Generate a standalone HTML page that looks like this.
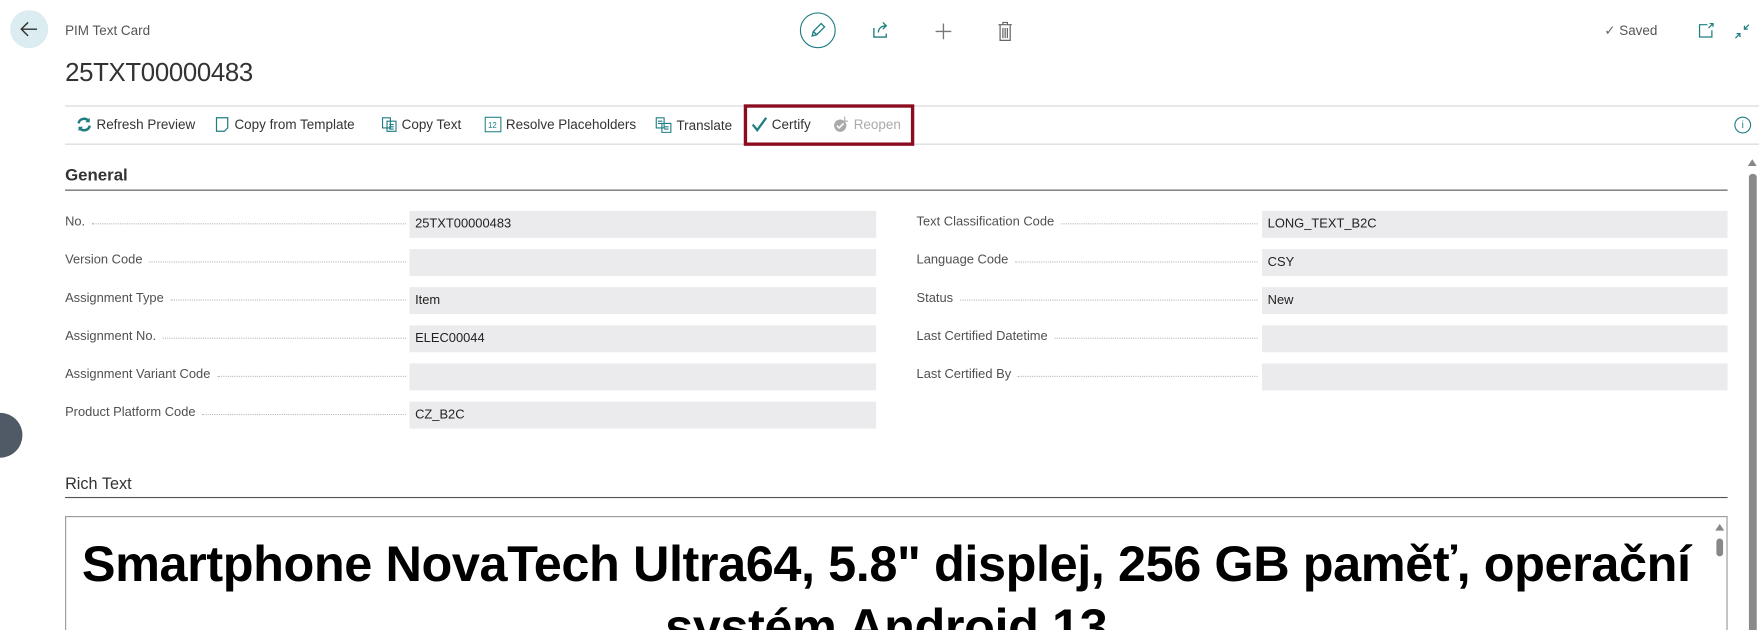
<!DOCTYPE html>
<html><head><meta charset="utf-8"><style>
html,body{margin:0;padding:0;width:1759px;height:630px;overflow:hidden;background:#fff}
#w{position:absolute;left:0;top:0;width:1568px;height:562px;transform:scale(1.12181);transform-origin:0 0;font-family:"Liberation Sans",sans-serif;color:#333;overflow:hidden}
.a{position:absolute}
.t{font-size:12.5px;color:#333;white-space:nowrap}
.lbl{position:absolute;font-size:11.5px;color:#505050;white-space:nowrap;display:flex;align-items:center}
.lbl .d{border-bottom:1px dotted #bbb;flex:1;margin:0 6px;height:0;margin-top:3px}
.box{position:absolute;height:24px;background:#ebebed;font-size:11.5px;color:#222;line-height:24px;padding-left:5px;box-sizing:border-box}
.act{position:absolute;top:104px;font-size:12px;color:#333;display:flex;align-items:center;white-space:nowrap}
.act svg{margin-right:4px}
</style></head><body><div id="w">
<div class="a" style="left:9px;top:9px;width:34px;height:34px;border-radius:50%;background:#dcedf2"></div>
<svg class="a" style="left:17px;top:18px" width="18" height="16" viewBox="0 0 18 16"><path d="M16 8H2M8 2L2 8l6 6" stroke="#333" stroke-width="1.3" fill="none"/></svg>
<div class="a t" style="left:58px;top:20px;font-size:12px;color:#555">PIM Text Card</div>
<div class="a" style="left:58px;top:51px;font-size:23px;color:#333;letter-spacing:-0.3px">25TXT00000483</div>
<div class="a" style="left:713px;top:11px;width:32px;height:32px;border-radius:50%;border:1.3px solid #1e7d82;box-sizing:border-box"></div>
<svg class="a" style="left:721px;top:19px" width="16" height="16" viewBox="0 0 16 16"><path d="M3 13l1-4 7-7 3 3-7 7z M4 9l3 3" stroke="#1e7d82" stroke-width="1.2" fill="none"/></svg>
<svg class="a" style="left:777px;top:19px" width="16" height="16" viewBox="0 0 16 16"><path d="M2 6v8h11v-3M6 10c0-4 3-6 7-6M10 1l3 3-3 3" stroke="#1e7d82" stroke-width="1.2" fill="none"/></svg>
<svg class="a" style="left:833px;top:20px" width="16" height="16" viewBox="0 0 16 16"><path d="M8 1v14M1 8h14" stroke="#777" stroke-width="1.2"/></svg>
<svg class="a" style="left:889px;top:19px" width="14" height="18" viewBox="0 0 14 18"><path d="M1 3h12M5 3V1h4v2M2.5 3v14h9V3M5 6v9M7 6v9M9 6v9" stroke="#666" stroke-width="1.1" fill="none"/></svg>
<div class="a t" style="left:1430px;top:20px;color:#555;font-size:12px"><span style="color:#666">✓</span> Saved</div>
<svg class="a" style="left:1514px;top:20px" width="14" height="14" viewBox="0 0 14 14"><path d="M8 2H1v11h11V7M10 1h3v3M13 1l-4 4" stroke="#1e7d82" stroke-width="1.1" fill="none"/></svg>
<svg class="a" style="left:1546px;top:21px" width="14" height="14" viewBox="0 0 14 14"><path d="M13 1L9 5M9 2v3h3M1 13l4-4M5 12V9H2" stroke="#1e7d82" stroke-width="1.1" fill="none"/></svg>

<div class="a" style="left:58px;top:94px;width:1510px;border-top:1px solid #d6d6d6"></div>
<div class="a" style="left:58px;top:128px;width:1510px;border-top:1px solid #d6d6d6"></div>
<div class="act" style="left:68px"><svg width="14" height="14" viewBox="0 0 14 14"><path d="M2 6a5 5 0 0 1 9-2M12 8a5 5 0 0 1-9 2" stroke="#1e7d82" stroke-width="2.2" fill="none"/><path d="M12 1v4H8M2 13V9h4" fill="#1e7d82"/></svg>Refresh Preview</div>
<div class="act" style="left:192px"><svg width="13" height="14" viewBox="0 0 13 14"><path d="M1 1h10v9l-3 3H1z" stroke="#1e7d82" stroke-width="1.1" fill="none"/></svg>Copy from Template</div>
<div class="act" style="left:340px"><svg width="14" height="14" viewBox="0 0 14 14"><path d="M1 1h7v9H1zM5 4h8v9H5zM7 7h4M7 9h4M7 11h4" stroke="#1e7d82" stroke-width="1" fill="#fff"/></svg>Copy Text</div>
<div class="act" style="left:432px"><svg width="15" height="14" viewBox="0 0 15 14"><rect x="0.5" y="0.5" width="14" height="13" stroke="#1e7d82" fill="none"/><text x="3" y="10" font-size="7" fill="#1e7d82" font-family="Liberation Sans">12</text></svg>Resolve Placeholders</div>
<div class="act" style="left:584px"><svg width="15" height="15" viewBox="0 0 15 15"><path d="M1 1h7v9H1zM6 6h8v8H6zM2.5 4h4M2.5 6h3M8 9h4M8 11h4" stroke="#1e7d82" stroke-width="1" fill="#fff"/></svg>Translate</div>
<div class="act" style="left:670px"><svg width="14" height="14" viewBox="0 0 14 14"><path d="M1 7l4 5 8-11" stroke="#1e7d82" stroke-width="2" fill="none"/></svg>Certify</div>
<div class="act" style="left:743px;color:#aaa"><svg width="14" height="14" viewBox="0 0 14 14"><circle cx="6" cy="8" r="5.5" fill="#aaa"/><path d="M3 8l2 2 4-4" stroke="#fff" stroke-width="1.4" fill="none"/><path d="M10 0v4h3" stroke="#aaa" fill="none"/></svg>Reopen</div>
<div class="a" style="left:663px;top:93px;width:152px;height:37px;border:3px solid #8b0c1f;box-sizing:border-box"></div>
<div class="a" style="left:1546px;top:104px;width:13px;height:13px;border:1px solid #1e7d82;border-radius:50%;font-size:9px;color:#1e7d82;text-align:center;line-height:13px">i</div>

<div class="a" style="left:58px;top:148px;font-size:15px;font-weight:bold;color:#333">General</div>
<div class="a" style="left:58px;top:169px;width:1482px;border-top:1.3px solid #555"></div>

<div class="lbl" style="left:58px;top:192px;width:310px">No.<span class="d"></span></div><div class="box" style="left:365px;top:188px;width:416px">25TXT00000483</div>
<div class="lbl" style="left:58px;top:226px;width:310px">Version Code<span class="d"></span></div><div class="box" style="left:365px;top:222px;width:416px"></div>
<div class="lbl" style="left:58px;top:260px;width:310px">Assignment Type<span class="d"></span></div><div class="box" style="left:365px;top:256px;width:416px">Item</div>
<div class="lbl" style="left:58px;top:294px;width:310px">Assignment No.<span class="d"></span></div><div class="box" style="left:365px;top:290px;width:416px">ELEC00044</div>
<div class="lbl" style="left:58px;top:328px;width:310px">Assignment Variant Code<span class="d"></span></div><div class="box" style="left:365px;top:324px;width:416px"></div>
<div class="lbl" style="left:58px;top:362px;width:310px">Product Platform Code<span class="d"></span></div><div class="box" style="left:365px;top:358px;width:416px">CZ_B2C</div>

<div class="lbl" style="left:817px;top:192px;width:310px">Text Classification Code<span class="d"></span></div><div class="box" style="left:1125px;top:188px;width:415px">LONG_TEXT_B2C</div>
<div class="lbl" style="left:817px;top:226px;width:310px">Language Code<span class="d"></span></div><div class="box" style="left:1125px;top:222px;width:415px">CSY</div>
<div class="lbl" style="left:817px;top:260px;width:310px">Status<span class="d"></span></div><div class="box" style="left:1125px;top:256px;width:415px">New</div>
<div class="lbl" style="left:817px;top:294px;width:310px">Last Certified Datetime<span class="d"></span></div><div class="box" style="left:1125px;top:290px;width:415px"></div>
<div class="lbl" style="left:817px;top:328px;width:310px">Last Certified By<span class="d"></span></div><div class="box" style="left:1125px;top:324px;width:415px"></div>

<div class="a" style="left:-20px;top:368px;width:40px;height:40px;border-radius:50%;background:#505a66"></div>

<div class="a" style="left:58px;top:424px;font-size:14.5px;color:#333">Rich Text</div>
<div class="a" style="left:58px;top:443px;width:1482px;border-top:1.3px solid #555"></div>

<div class="a" style="left:58px;top:460px;width:1482px;height:120px;border:1px solid #999;box-sizing:border-box;overflow:hidden">
<div style="position:absolute;left:0;top:14px;width:1462px;text-align:center;font-weight:bold;font-size:45px;line-height:56px;color:#000;letter-spacing:-0.4px;white-space:nowrap">Smartphone NovaTech Ultra64, 5.8" displej, 256 GB paměť, operační<br>systém Android 13</div>
<div style="position:absolute;left:1470px;top:6px;width:0;height:0;border-left:4px solid transparent;border-right:4px solid transparent;border-bottom:6px solid #888"></div>
<div style="position:absolute;left:1471px;top:19px;width:6px;height:16px;border-radius:3px;background:#888"></div>
</div>

<div class="a" style="left:1558px;top:142px;width:0;height:0;border-left:4px solid transparent;border-right:4px solid transparent;border-bottom:6px solid #888"></div>
<div class="a" style="left:1559px;top:155px;width:7px;height:420px;border-radius:3px;background:#8a8a8a"></div>
</div></body></html>
